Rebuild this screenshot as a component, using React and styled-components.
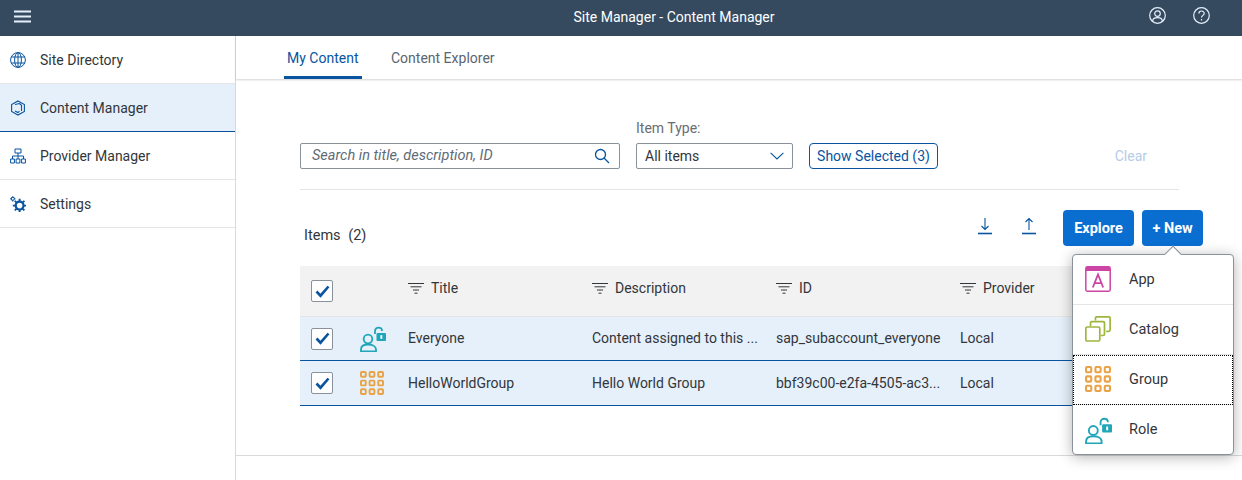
import React from "react";
import styled, { createGlobalStyle } from "styled-components";

const GlobalStyle = createGlobalStyle`
  html, body {
    margin: 0;
    height: 480px;
    overflow: hidden;
    background: #fff;
    font-family: Roboto, "Noto Sans", sans-serif;
    font-size: 14px;
    color: #32363a;
  }
  * { box-sizing: border-box; }
`;

const Page = styled.div`
  width: 1242px;
  height: 480px;
  display: flex;
  flex-direction: column;
  overflow: hidden;
`;

const ShellBar = styled.header`
  height: 36px;
  flex: none;
  background: #354a5f;
  display: grid;
  grid-template-columns: 1fr auto 1fr;
  align-items: center;
  color: #fff;
  padding: 0 32px 0 14px;
`;

const ShellTitle = styled.div`
  font-size: 14px;
  margin-top: -2px;
  margin-left: 124px;
`;

const ShellActions = styled.div`
  display: flex;
  justify-content: flex-end;
  gap: 27px;
  margin-top: -6px;
`;

const Body = styled.div`
  flex: 1;
  display: flex;
  min-height: 0;
`;

const Sidebar = styled.nav`
  width: 236px;
  flex: none;
  border-right: 1px solid #d9d9d9;
`;

const NavItem = styled.div`
  height: 48px;
  display: flex;
  align-items: center;
  gap: 14px;
  padding: 1px 0 0 10px;
  border-bottom: 1px solid ${(p) => (p.$active ? "#0a4f9c" : "#e5e5e5")};
  background: ${(p) => (p.$active ? "#e5f0fa" : "#fff")};
`;

const Main = styled.main`
  flex: 1;
  min-width: 0;
  display: flex;
  flex-direction: column;
`;

const Tabs = styled.div`
  height: 43px;
  flex: none;
  display: flex;
  gap: 26px;
  padding-left: 48px;
  box-shadow: 0 1px 2px rgba(0, 0, 0, 0.18);
`;

const Tab = styled.div`
  padding: 14px 3px 0;
  height: 43px;
  width: ${(p) => p.$width}px;
  border-bottom: 3px solid ${(p) => (p.$active ? "#0854a0" : "transparent")};
  color: ${(p) => (p.$active ? "#0854a0" : "#5a6570")};
  white-space: nowrap;
`;

const Content = styled.div`
  height: 377px;
  flex: none;
  border-bottom: 1px solid #d9d9d9;
  padding: 41px 63px 0 64px;
  position: relative;
`;

const FilterBar = styled.div`
  display: flex;
  align-items: flex-end;
  gap: 16px;
  padding-bottom: 20px;
  border-bottom: 1px solid #e5e5e5;
`;

const FieldGroup = styled.div`
  display: flex;
  flex-direction: column;
  gap: 6px;
`;

const FieldLabel = styled.label`
  font-size: 14px;
  line-height: 17px;
  color: #6a6d70;
`;

const Field = styled.div`
  width: ${(p) => p.$width}px;
  height: 26px;
  border: 1px solid #89919a;
  border-radius: 2px;
  display: flex;
  align-items: center;
  justify-content: space-between;
  padding: 0 ${(p) => (p.$search ? 9 : 8)}px 0 ${(p) => (p.$search ? 11 : 8)}px;
  line-height: 18px;
`;

const Placeholder = styled.span`
  font-style: italic;
  font-size: 14.5px;
  color: #5f6b76;
`;

const GhostButton = styled.div`
  height: 26px;
  width: 129px;
  border: 1px solid #0854a0;
  border-radius: 4px;
  color: #0854a0;
  display: flex;
  align-items: center;
  justify-content: center;
`;

const ClearLink = styled.div`
  margin-left: auto;
  margin-right: 32px;
  height: 26px;
  line-height: 26px;
  color: #b5cde6;
`;

const ListHeader = styled.div`
  height: 76px;
  margin-right: -24px;
  display: flex;
  align-items: flex-start;
  padding: 20px 0 0 4px;
`;

const ListTitle = styled.div`
  margin-top: 17px;
  font-size: 14.5px;
  word-spacing: 4px;
  margin-right: auto;
`;

const IconSlot = styled.div`
  width: 44px;
  height: 36px;
  display: flex;
  align-items: center;
  justify-content: center;
  margin-top: -2px;
`;

const PrimaryButton = styled.div`
  width: ${(p) => p.$width}px;
  height: 36px;
  margin-left: ${(p) => p.$gap}px;
  background: #0a6ed1;
  border-radius: 4px;
  color: #fff;
  font-weight: 700;
  font-size: 14.5px;
  display: flex;
  align-items: center;
  justify-content: center;
`;

const Table = styled.div`
  border-bottom: 1px solid #0854a0;
`;

const Row = styled.div`
  display: grid;
  grid-template-columns: 60px 48px 184px 184px 184px 1fr;
  align-items: center;
  height: ${(p) => (p.$head ? 51 : 44)}px;
  background: ${(p) => (p.$head ? "#f2f2f2" : "#e5f0fa")};
  border-bottom: ${(p) =>
    p.$head ? "1px solid #e5e5e5" : p.$last ? "none" : "1px solid #0854a0"};
`;

const Check = styled.div`
  width: 22px;
  height: 22px;
  margin-left: 11px;
  background: #fff;
  border: 1px solid #89919a;
  border-radius: 2px;
  display: flex;
  align-items: center;
  justify-content: center;
`;

const Cell = styled.div`
  white-space: nowrap;
  overflow: hidden;
  margin-top: -1px;
`;

const HeadCell = styled.div`
  display: flex;
  align-items: center;
  gap: 7px;
  margin-top: -6px;
`;

const Menu = styled.div`
  position: absolute;
  left: 836px;
  top: 175px;
  width: 162px;
  height: 201px;
  background: #fff;
  border: 1px solid #89919a;
  border-radius: 4px;
  box-shadow: 0 2px 14px rgba(0, 0, 0, 0.3);
`;

const MenuArrow = styled.div`
  position: absolute;
  left: 94px;
  top: -7px;
  width: 12px;
  height: 12px;
  background: #fff;
  border-left: 1px solid #89919a;
  border-top: 1px solid #89919a;
  transform: rotate(45deg);
`;

const MenuItem = styled.div`
  position: relative;
  height: 50px;
  display: flex;
  align-items: center;
  gap: 17px;
  padding: 0 0 1px 12px;
  font-size: 14.5px;
  border-bottom: ${(p) => (p.$last ? "none" : "1px solid #e5e5e5")};
  outline: ${(p) => (p.$focus ? "1px dotted #000" : "none")};
  outline-offset: -1px;
`;

const MenuIcon = styled.div`
  width: 27px;
  height: 27px;
  margin-top: 1px;
  display: flex;
`;

const Line = ({ d, color = "#0854a0", w = 1.2, size = 16, view = 16 }) => (
  <svg width={size} height={size} viewBox={`0 0 ${view} ${view}`} fill="none" stroke={color} strokeWidth={w}>
    <path d={d} />
  </svg>
);

const Globe = () => (
  <svg width="16" height="16" viewBox="0 0 16 16" fill="none" stroke="#0854a0" strokeWidth="1">
    <circle cx="8" cy="8" r="7.4" />
    <ellipse cx="8" cy="8" rx="3.4" ry="7.4" />
    <path d="M8 .6v14.8M1.2 5h13.6M1.2 11h13.6" />
  </svg>
);

const Cube = () => (
  <Line d="M8 1l6.4 3.5v7L8 15l-6.4-3.5v-7L8 1zM5 4.5l4.5-1 2 1.8v5.6M5 11l3 1.6 1.5-1.4" w={1.1} />
);

const Hierarchy = () => (
  <Line d="M5 1h6v4H5zM8 5v3M2.5 11V8h11v3M8 8v3M.6 11h3.8v4H.6zM6.1 11h3.8v4H6.1zM11.6 11h3.8v4h-3.8z" w={1} />
);

const Gears = () => (
  <svg width="16" height="16" viewBox="0 0 16 16" fill="none" stroke="#0854a0">
    <circle cx="9.6" cy="9.6" r="3.9" strokeWidth="2.2" />
    <path d="M9.6 2.8v2.4M9.6 14v2M2.8 9.6h2.4M14 9.6h2M4.8 4.8l1.6 1.6M12.8 12.8l1.6 1.6M14.4 4.8l-1.6 1.6M6.4 12.8l-1.6 1.6" strokeWidth="1.9" />
    <circle cx="2.8" cy="2.8" r="1.6" strokeWidth="1.1" />
    <path d="M2.8 0v.9M2.8 4.7v.9M0 2.8h.9M4.7 2.8h.9" strokeWidth="1" />
  </svg>
);

const Burger = () => (
  <svg width="17" height="13" viewBox="0 0 17 13" stroke="#e6f0fb" strokeWidth="2" style={{ marginTop: -4 }}>
    <path d="M0 1.5h17M0 6.5h17M0 11.5h17" />
  </svg>
);

const UserCircle = () => (
  <svg width="17" height="17" viewBox="0 0 17 17" fill="none" stroke="#e6f0fb" strokeWidth="1.2">
    <circle cx="8.5" cy="8.5" r="7.8" />
    <circle cx="8.5" cy="6.6" r="2.8" />
    <path d="M3.6 14.4c0-5 9.8-5 9.8 0" />
  </svg>
);

const Help = () => (
  <svg width="17" height="17" viewBox="0 0 17 17" fill="none" stroke="#e6f0fb" strokeWidth="1.2">
    <circle cx="8.5" cy="8.5" r="7.8" />
    <path d="M5.9 6.6c0-3.4 5.3-3.4 5.3-.2 0 2-2.7 2-2.7 4.2M8.5 12v1.4" />
  </svg>
);

const Search = () => (
  <svg width="16" height="16" viewBox="0 0 16 16" fill="none" stroke="#0854a0" strokeWidth="1.3">
    <circle cx="6.5" cy="6.5" r="5" />
    <path d="M10 10l5 5" />
  </svg>
);

const Chevron = () => (
  <svg width="14" height="8" viewBox="0 0 14 8" fill="none" stroke="#0854a0" strokeWidth="1.1">
    <path d="M.6.8L7 7l6.4-6.2" />
  </svg>
);

const ArrowDown = () => (
  <svg width="16" height="18" viewBox="0 0 16 18" fill="none" stroke="#0854a0">
    <path d="M8 1v11M4.5 9L8 12.5 11.5 9" strokeWidth="1.1" />
    <path d="M1 16.5h14" strokeWidth="1.6" />
  </svg>
);

const ArrowUp = () => (
  <svg width="16" height="18" viewBox="0 0 16 18" fill="none" stroke="#0854a0">
    <path d="M8 13V1.5M4.5 5L8 1.5 11.5 5" strokeWidth="1.1" />
    <path d="M1 16.5h14" strokeWidth="1.6" />
  </svg>
);

const Tick = () => (
  <svg width="15" height="13" viewBox="0 0 15 13" fill="none" stroke="#0854a0" strokeWidth="2.6">
    <path d="M1.5 6.5l4 4.2L13.5 1.5" />
  </svg>
);

const SortLines = () => (
  <svg width="16" height="11" viewBox="0 0 16 11" stroke="#32363a" strokeWidth="1">
    <path d="M0 .5h16M2.5 3.8h11M5 7h6M6.5 10.2h3" />
  </svg>
);

const GroupIcon = ({ size = 24 }) => {
  const cells = [];
  for (let y = 0; y < 3; y++) {
    for (let x = 0; x < 3; x++) {
      cells.push(<rect key={`${x}${y}`} x={1 + x * 9} y={1 + y * 9} width="5" height="5" rx="1" />);
    }
  }
  return (
    <svg width={size} height={size} viewBox="0 0 25 25" fill="none" stroke="#e9a245" strokeWidth="2">
      {cells}
    </svg>
  );
};

const RoleIcon = ({ size = 26 }) => (
  <svg width={size} height={size} viewBox="0 0 26 26" fill="none" stroke="#1fa6b8" strokeWidth="1.8">
    <circle cx="8" cy="13" r="4.3" />
    <path d="M1 25.5v-2c0-3.4 3-5 7-5s8 1.6 8 5v2z" />
    <path d="M15 8V5c0-4.4 7-4.4 7 0" />
    <rect x="16.5" y="7" width="9.5" height="8" rx="1" fill="#1fa6b8" stroke="none" />
    <rect x="20.4" y="9.2" width="1.9" height="3.6" fill="#fff" stroke="none" />
  </svg>
);

const AppIcon = () => (
  <svg width="26" height="26" viewBox="0 0 26 26" fill="none">
    <rect x=".8" y=".8" width="24.4" height="24.4" rx="1.6" stroke="#cc45a5" strokeWidth="1.5" />
    <path d="M1 2.2c0-.8.6-1.2 1.2-1.2h21.6c.6 0 1.2.4 1.2 1.2V5H1z" fill="#cc45a5" />
    <path d="M7.8 21.5L13 8.5l5.2 13M9.6 17.2h6.8" stroke="#cc45a5" strokeWidth="1.8" />
  </svg>
);

const CatalogIcon = () => (
  <svg width="26" height="26" viewBox="0 0 26 26" fill="none" stroke="#9db63d" strokeWidth="1.7">
    <rect x=".8" y="11" width="14" height="14" rx="1.4" />
    <path d="M5.5 10V7c0-.8.5-1.3 1.3-1.3h11.4c.8 0 1.3.5 1.3 1.3v11.2c0 .8-.5 1.3-1.3 1.3h-2.4" />
    <path d="M10.5 4.6V2.1c0-.8.5-1.3 1.3-1.3h12c.8 0 1.3.5 1.3 1.3v12c0 .8-.5 1.3-1.3 1.3h-2.6" />
  </svg>
);

const rows = [
  { title: "Everyone", desc: "Content assigned to this ...", id: "sap_subaccount_everyone", icon: <RoleIcon /> },
  { title: "HelloWorldGroup", desc: "Hello World Group", id: "bbf39c00-e2fa-4505-ac3...", icon: <GroupIcon /> },
];

export default function App() {
  return (
    <Page>
      <GlobalStyle />
      <ShellBar>
        <Burger />
        <ShellTitle>Site Manager - Content Manager</ShellTitle>
        <ShellActions>
          <UserCircle />
          <Help />
        </ShellActions>
      </ShellBar>
      <Body>
        <Sidebar>
          <NavItem><Globe />Site Directory</NavItem>
          <NavItem $active><Cube />Content Manager</NavItem>
          <NavItem><Hierarchy />Provider Manager</NavItem>
          <NavItem><Gears />Settings</NavItem>
        </Sidebar>
        <Main>
          <Tabs>
            <Tab $active $width={78}>My Content</Tab>
            <Tab $width={108}>Content Explorer</Tab>
          </Tabs>
          <Content>
            <FilterBar>
              <Field $width={320} $search>
                <Placeholder>Search in title, description, ID</Placeholder>
                <Search />
              </Field>
              <FieldGroup>
                <FieldLabel>Item Type:</FieldLabel>
                <Field $width={157}>
                  All items
                  <Chevron />
                </Field>
              </FieldGroup>
              <GhostButton>Show Selected (3)</GhostButton>
              <ClearLink>Clear</ClearLink>
            </FilterBar>
            <ListHeader>
              <ListTitle>Items (2)</ListTitle>
              <IconSlot><ArrowDown /></IconSlot>
              <IconSlot><ArrowUp /></IconSlot>
              <PrimaryButton $width={71} $gap={12}>Explore</PrimaryButton>
              <PrimaryButton $width={61} $gap={8}>+ New</PrimaryButton>
            </ListHeader>
            <Table>
              <Row $head>
                <Check><Tick /></Check>
                <span />
                <HeadCell><SortLines />Title</HeadCell>
                <HeadCell><SortLines />Description</HeadCell>
                <HeadCell><SortLines />ID</HeadCell>
                <HeadCell><SortLines />Provider</HeadCell>
              </Row>
              {rows.map((r, i) => (
                <Row key={r.title} $last={i === rows.length - 1}>
                  <Check><Tick /></Check>
                  {r.icon}
                  <Cell>{r.title}</Cell>
                  <Cell>{r.desc}</Cell>
                  <Cell>{r.id}</Cell>
                  <Cell>Local</Cell>
                </Row>
              ))}
            </Table>
            <Menu>
              <MenuArrow />
              <MenuItem><MenuIcon><AppIcon /></MenuIcon>App</MenuItem>
              <MenuItem><MenuIcon><CatalogIcon /></MenuIcon>Catalog</MenuItem>
              <MenuItem $focus><MenuIcon><GroupIcon size={26} /></MenuIcon>Group</MenuItem>
              <MenuItem $last><MenuIcon><RoleIcon size={27} /></MenuIcon>Role</MenuItem>
            </Menu>
          </Content>
        </Main>
      </Body>
    </Page>
  );
}
